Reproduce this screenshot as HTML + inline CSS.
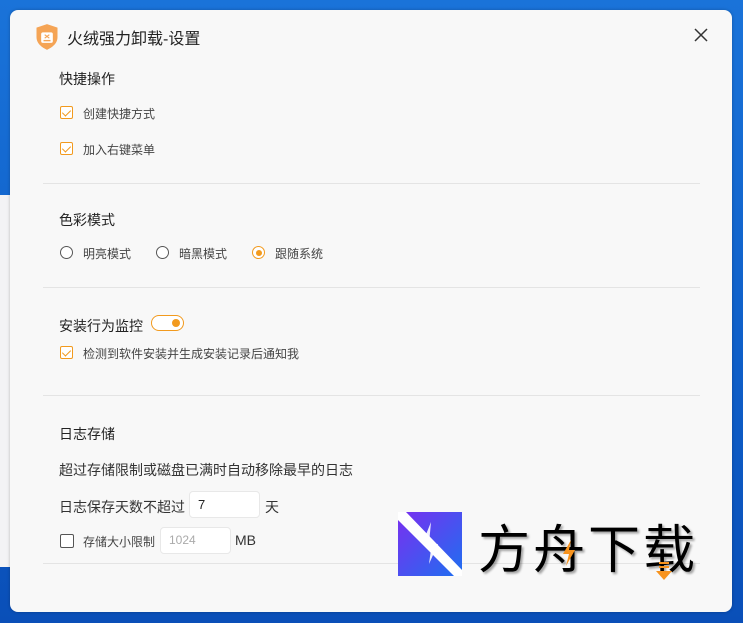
<!DOCTYPE html>
<html><head><meta charset="utf-8"><style>
*{margin:0;padding:0;box-sizing:border-box}
body{width:743px;height:623px;overflow:hidden;background:linear-gradient(180deg,#1a73d9 0%,#0e5ec8 60%,#0a4fb8 100%);font-family:"Liberation Sans","Noto Sans CJK SC",sans-serif;position:relative}
.strip{position:absolute;left:0;top:195px;width:12px;height:372px;background:#f3f3f5}
.win{position:absolute;left:10px;top:10px;width:722px;height:602px;background:#f8f8f8;border-radius:8px;box-shadow:0 0 3px rgba(0,0,0,.25)}
.t{position:absolute;white-space:nowrap;color:#222}
.h{font-size:14px}
.s{font-size:12px;color:#444}
.cb{position:absolute;width:13px;height:13px;border:1px solid #f29a1e;border-radius:2px;background:#fff}
.cb:after{content:"";position:absolute;left:3px;top:1px;width:4px;height:7px;border:solid #f29a1e;border-width:0 1.3px 1.3px 0;transform:rotate(45deg)}
.cb.off{border-color:#555}.cb.off:after{display:none}
.rd{position:absolute;width:13px;height:13px;border:1px solid #555;border-radius:50%;background:#fff}
.rd.on{border-color:#f29a1e}.rd.on:after{content:"";position:absolute;left:2.5px;top:2.5px;width:6px;height:6px;border-radius:50%;background:#f29a1e}
.hr{position:absolute;left:33px;width:657px;height:1px;background:#e4e4e4}
.in{position:absolute;height:27px;border:1px solid #e8e8e8;border-radius:4px;background:#fff;font-size:13px;padding:5px 8px}
</style></head><body>
<div class="strip"></div>
<div class="win">
 <svg style="position:absolute;left:24px;top:13px" width="26" height="28" viewBox="0 0 22 24"><path d="M11 1 L20 4 V12 C20 18 15 21 11 23 C7 21 2 18 2 12 V4 Z" fill="#f5a455"/><rect x="6" y="8" width="10" height="9" rx="1.5" fill="#fff"/><path d="M9 10l4 3M13 10l-4 3" stroke="#f5a455" stroke-width="1"/><rect x="8" y="14.5" width="6" height="1.2" fill="#f5a455"/></svg>
 <div class="t" style="left:57px;top:15px;font-size:16px;color:#222">火绒强力卸载-设置</div>
 <svg style="position:absolute;left:684px;top:18px" width="14" height="14"><path d="M1 1L13 13M13 1L1 13" stroke="#333" stroke-width="1.5"/></svg>

 <div class="t h" style="left:49px;top:59px">快捷操作</div>
 <div class="cb" style="left:50px;top:96px"></div><div class="t s" style="left:73px;top:95px">创建快捷方式</div>
 <div class="cb" style="left:50px;top:132px"></div><div class="t s" style="left:73px;top:131px">加入右键菜单</div>
 <div class="hr" style="top:173px"></div>

 <div class="t h" style="left:49px;top:200px">色彩模式</div>
 <div class="rd" style="left:50px;top:236px"></div><div class="t s" style="left:73px;top:235px">明亮模式</div>
 <div class="rd" style="left:146px;top:236px"></div><div class="t s" style="left:169px;top:235px">暗黑模式</div>
 <div class="rd on" style="left:242px;top:236px"></div><div class="t s" style="left:265px;top:235px">跟随系统</div>
 <div class="hr" style="top:277px"></div>

 <div class="t h" style="left:49px;top:306px">安装行为监控</div>
 <div style="position:absolute;left:141px;top:305px;width:33px;height:16px;border:1.5px solid #f29a1e;border-radius:8px;background:#fff"><div style="position:absolute;right:3px;top:3px;width:8px;height:8px;border-radius:50%;background:#f29a1e"></div></div>
 <div class="cb" style="left:50px;top:336px"></div><div class="t s" style="left:73px;top:335px">检测到软件安装并生成安装记录后通知我</div>
 <div class="hr" style="top:385px"></div>

 <div class="t h" style="left:49px;top:414px">日志存储</div>
 <div class="t" style="left:49px;top:450px;font-size:14px;color:#333">超过存储限制或磁盘已满时自动移除最早的日志</div>
 <div class="t" style="left:49px;top:487px;font-size:14px;color:#333">日志保存天数不超过</div>
 <div class="in" style="left:179px;top:481px;width:71px;color:#222">7</div>
 <div class="t" style="left:255px;top:487px;font-size:14px;color:#333">天</div>
 <div class="cb off" style="left:50px;top:524px;width:14px;height:14px"></div>
 <div class="t s" style="left:73px;top:523px">存储大小限制</div>
 <div class="in" style="left:150px;top:517px;width:71px;color:#aaa;font-size:12px">1024</div>
 <div class="t" style="left:225px;top:522px;font-size:14px;color:#333">MB</div>
 <div class="hr" style="top:553px"></div>

 <svg style="position:absolute;left:388px;top:502px" width="64" height="64" viewBox="0 0 64 64"><defs><linearGradient id="g" x1="0" y1="0" x2="1" y2="1"><stop offset="0" stop-color="#7a2ff0"/><stop offset="1" stop-color="#1e6ff0"/></linearGradient></defs><rect width="64" height="64" fill="url(#g)"/><path d="M0 0H8L64 58V64H56L0 8Z" fill="#fff"/><path d="M33 10L31 32 40 32 31 52 34 30 25 30Z" fill="#fff" opacity=".9"/></svg>
 <div class="t" style="left:468px;top:505px;font-size:52px;color:#000;letter-spacing:3px;text-shadow:2px 2px 2px rgba(0,0,0,.35);font-family:'Noto Sans CJK SC',sans-serif;line-height:62px">方舟下载</div>
 <svg style="position:absolute;left:551px;top:530px" width="16" height="26"><path d="M10 0L2 14H8L5 26L14 10H8Z" fill="#f7931e"/></svg>
 <svg style="position:absolute;left:646px;top:552px" width="16" height="26"><rect x="3" y="0" width="10" height="2" fill="#f7931e"/><rect x="3" y="4" width="10" height="2" fill="#f7931e"/><path d="M0 9H16L8 18Z" fill="#f7931e"/></svg>
</div>
</body></html>
